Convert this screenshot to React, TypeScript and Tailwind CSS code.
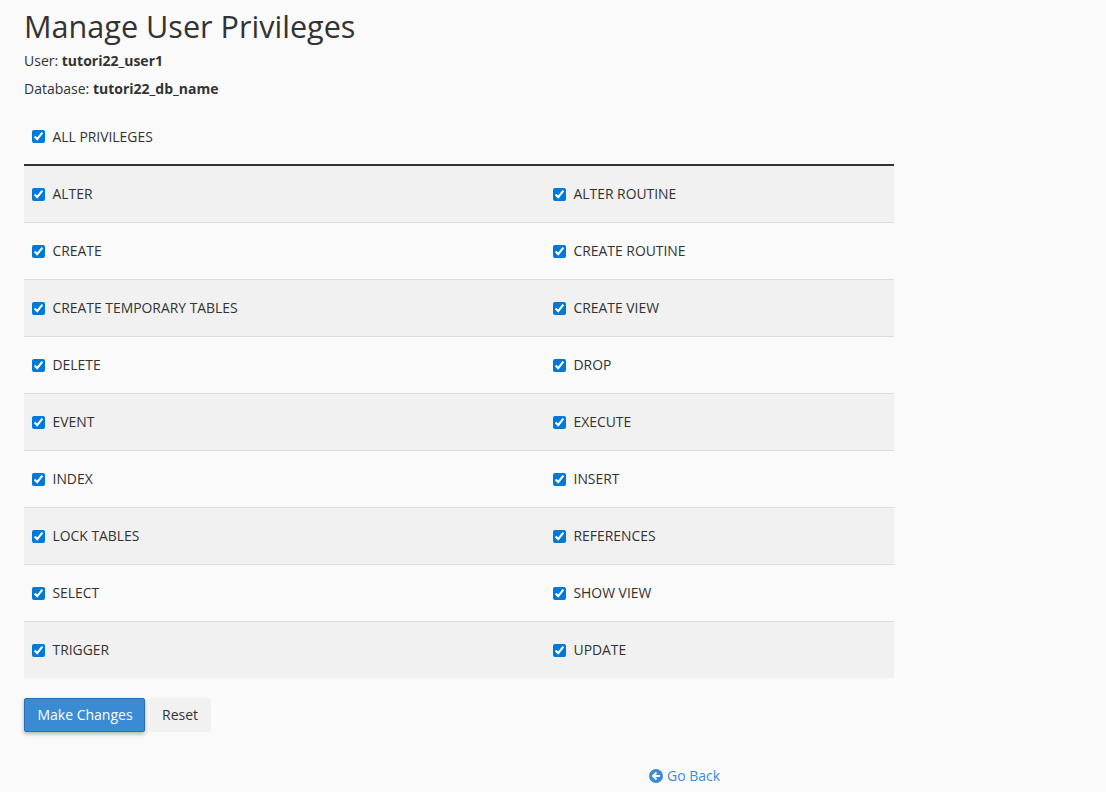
const rows = [
  ["ALTER", "ALTER ROUTINE"],
  ["CREATE", "CREATE ROUTINE"],
  ["CREATE TEMPORARY TABLES", "CREATE VIEW"],
  ["DELETE", "DROP"],
  ["EVENT", "EXECUTE"],
  ["INDEX", "INSERT"],
  ["LOCK TABLES", "REFERENCES"],
  ["SELECT", "SHOW VIEW"],
  ["TRIGGER", "UPDATE"],
];

function Check({ label }: { label: string }) {
  return (
    <label className="flex items-center gap-[7.5px] text-[13.9px] leading-[20px] text-[#333]">
      <input type="checkbox" defaultChecked className="w-[13px] h-[13px] m-0 accent-[#0078d7]" />
      <span>{label}</span>
    </label>
  );
}

export default function App() {
  return (
    <div className="h-[792px] overflow-hidden bg-[#fafafa] px-[24px] font-['Open_Sans',sans-serif] text-[14px] text-[#333]">
      <h1 className="pt-[8px] text-[30.6px] leading-[36px] text-[#333]">Manage User Privileges</h1>
      <p className="mt-[7px] leading-[20px]">User: <b>tutori22_user1</b></p>
      <p className="mt-[8px] leading-[20px]">Database: <b>tutori22_db_name</b></p>
      <div className="w-[870px] mt-[8px]">
        <div className="h-[55px] pt-[2px] pl-[8px] flex items-center border-b-2 border-[#333] box-content">
          <Check label="ALL PRIVILEGES" />
        </div>
        {rows.map((r, i) => (
          <div key={r[0]} className={`grid grid-cols-[521px_1fr] items-center pl-[8px] ${i % 2 === 0 ? "bg-[#f1f1f1]" : "bg-[#fafafa]"} ${i < 8 ? "h-[57px] border-b border-[#ddd]" : "h-[56px]"}`}>
            <Check label={r[0]} />
            <Check label={r[1]} />
          </div>
        ))}
      </div>
      <div className="flex mt-[20px] gap-[4px]">
        <button className="h-[34px] w-[121px] pb-[2px] pl-[1px] rounded-[2px] border border-[#2a6fb5] bg-[#3a8bd3] text-white text-[14px] shadow-[0_2px_4px_rgba(0,0,0,0.3)]">Make Changes</button>
        <button className="h-[34px] w-[62px] pb-[2px] rounded-[2px] bg-[#f1f1f1] text-[#333] text-[14px]">Reset</button>
      </div>
      <div className="mt-[33px] pl-[625px] text-[#3a8bd3]">
        <a className="inline-flex items-center gap-[4px]">
          <svg width="14" height="14" viewBox="0 0 14 14"><circle cx="7" cy="7" r="7" fill="#3a8bd3"/><path d="M7.5 3.5 4 7l3.5 3.5M4.5 7H11" stroke="#fafafa" strokeWidth="2" fill="none"/></svg>
          Go Back
        </a>
      </div>
    </div>
  );
}
